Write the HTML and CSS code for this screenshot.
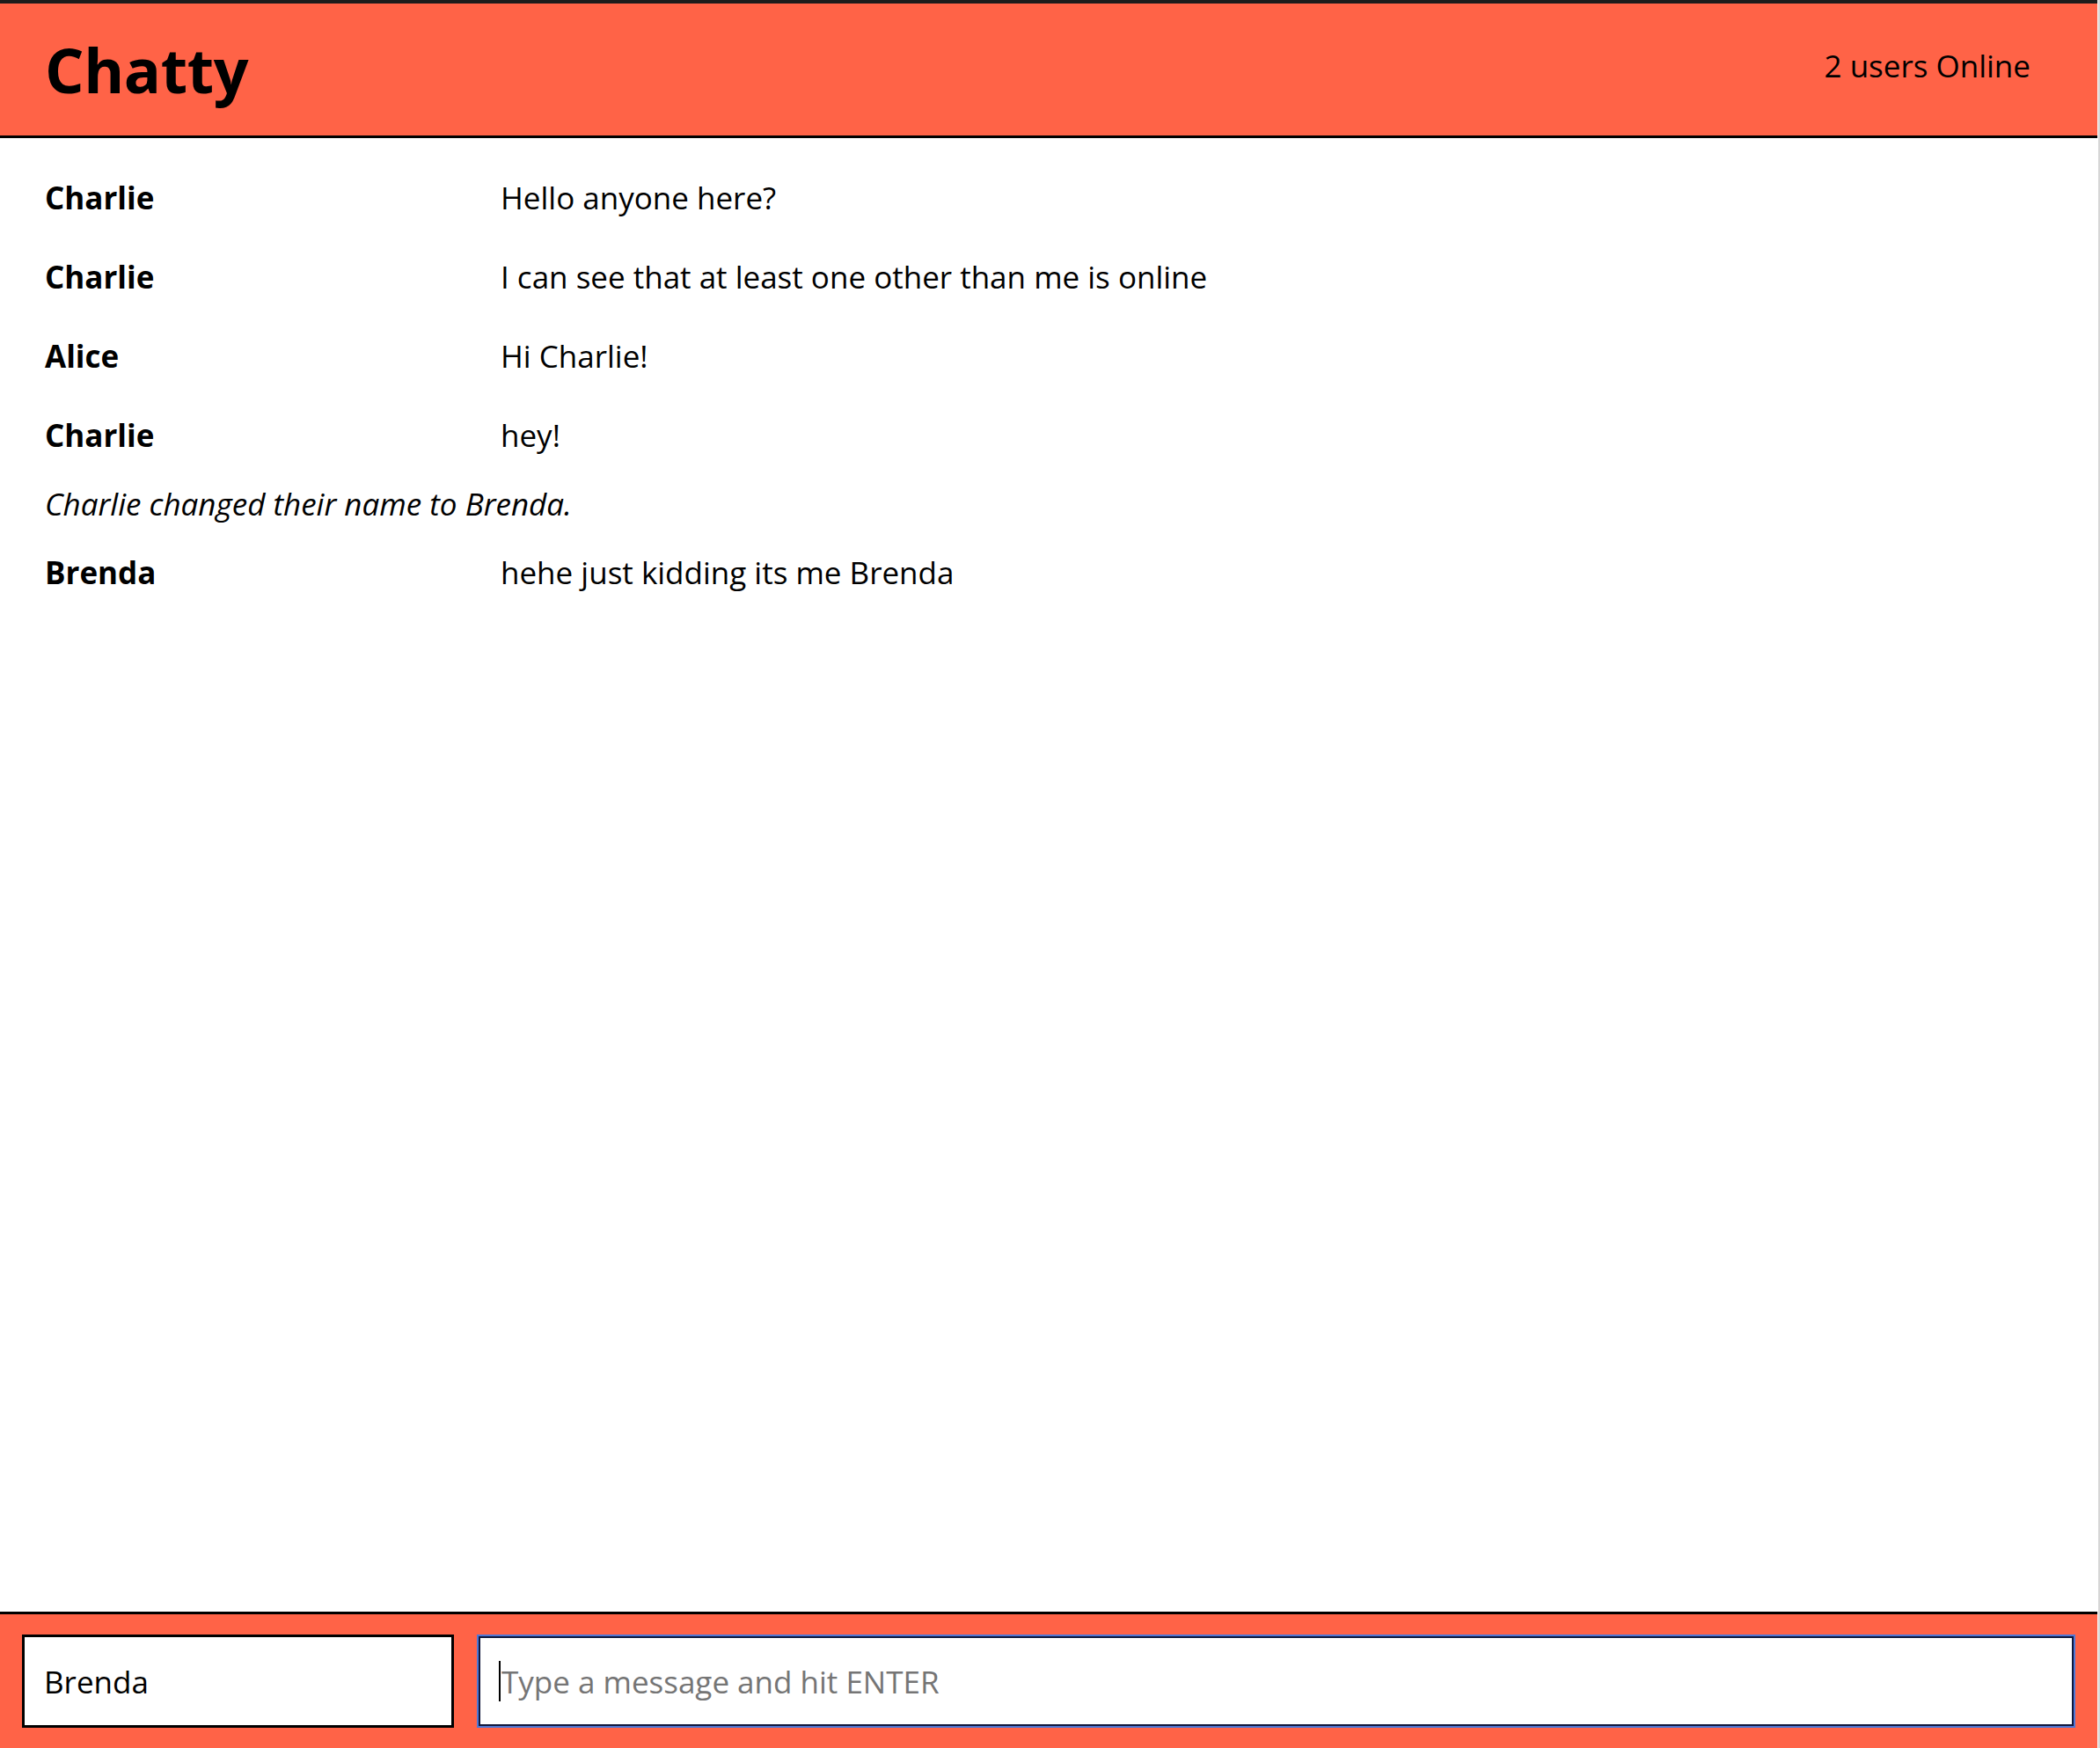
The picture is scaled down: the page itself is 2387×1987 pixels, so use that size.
FILE: index.html
```html
<!DOCTYPE html>
<html lang="en">
<head>
<meta charset="utf-8">
<title>Chatty</title>
<link rel="stylesheet" href="styles.css">
</head>
<body>
<div class="app">
  <header class="navbar">
    <h1 class="brand">Chatty</h1>
    <span class="online">2 users Online</span>
  </header>
  <main class="messages">
    <div class="message"><span class="username">Charlie</span><span class="content">Hello anyone here?</span></div>
    <div class="message"><span class="username">Charlie</span><span class="content">I can see that at least one other than me is online</span></div>
    <div class="message"><span class="username">Alice</span><span class="content">Hi Charlie!</span></div>
    <div class="message"><span class="username">Charlie</span><span class="content">hey!</span></div>
    <div class="message system">Charlie changed their name to Brenda.</div>
    <div class="message"><span class="username">Brenda</span><span class="content">hehe just kidding its me Brenda</span></div>
  </main>
  <footer class="chatbar">
    <input class="chatbar-username" type="text" value="Brenda">
    <div class="chatbar-msg-wrap">
      <input class="chatbar-message" type="text" placeholder="Type a message and hit ENTER">
      <span class="caret"></span>
    </div>
  </footer>
</div>
</body>
</html>
```
FILE: styles.css
```css
html, body {
  margin: 0;
  padding: 0;
  background: #ffffff;
}
body {
  display: flex;
  height: 100vh;
  border-right: 2px solid #d6d6d6;
  box-sizing: border-box;
  font-family: "Open Sans", "Noto Sans", sans-serif;
  font-size: 35px;
  color: #000;
}
.app {
  flex: 1;
  margin-right: 1px;
  display: flex;
  flex-direction: column;
  min-width: 0;
}
.navbar {
  flex: 0 0 auto;
  height: 157px;
  box-sizing: border-box;
  border-top: 4px solid #1c1c1c;
  border-bottom: 3px solid #000;
  background: #ff6347;
  display: flex;
  align-items: center;
  justify-content: space-between;
  padding: 0 76px 0 51px;
}
.brand {
  margin: 0;
  font-size: 70px;
  font-weight: 700;
  letter-spacing: -0.4px;
  line-height: normal;
}
.online {
  font-size: 35px;
  line-height: 54px;
  padding-bottom: 8px;
}
.messages {
  flex: 1;
  padding-top: 23px;
}
.message {
  display: flex;
  padding: 18px 51px;
  line-height: 54px;
}
.username {
  flex: 0 0 518px;
  font-weight: 700;
}
.content {
  flex: 1;
}
.system {
  font-style: italic;
  padding-top: 6px;
  padding-bottom: 6px;
}
.chatbar {
  flex: 0 0 auto;
  height: 155px;
  box-sizing: border-box;
  border-top: 3px solid #000;
  background: #ff6347;
  display: flex;
  align-items: center;
  gap: 28px;
  padding: 0 27px 0 25px;
}
.chatbar-username {
  flex: none;
  width: 491px;
  min-width: 0;
  height: 106px;
  box-sizing: border-box;
  border: 3px solid #000;
  padding: 0 22px;
  margin: 0;
  font-family: "Open Sans", "Noto Sans", sans-serif;
  font-size: 35px;
  color: #000;
  background: #fff;
  outline: none;
}
.chatbar-msg-wrap {
  flex: 1;
  min-width: 0;
  position: relative;
  display: flex;
}
.chatbar-message {
  flex: 1;
  min-width: 0;
  width: 100%;
  height: 102px;
  box-sizing: border-box;
  border: 2px solid #10183c;
  box-shadow: 0 0 0 2px #4f77d6;
  padding: 0 24px;
  margin: 0;
  font-family: "Open Sans", "Noto Sans", sans-serif;
  font-size: 35px;
  color: #000;
  background: #fff;
  outline: none;
}
.chatbar-message::placeholder {
  color: #757575;
}
.caret {
  position: absolute;
  left: 23px;
  top: 28px;
  width: 2px;
  height: 46px;
  background: #000;
}
```
